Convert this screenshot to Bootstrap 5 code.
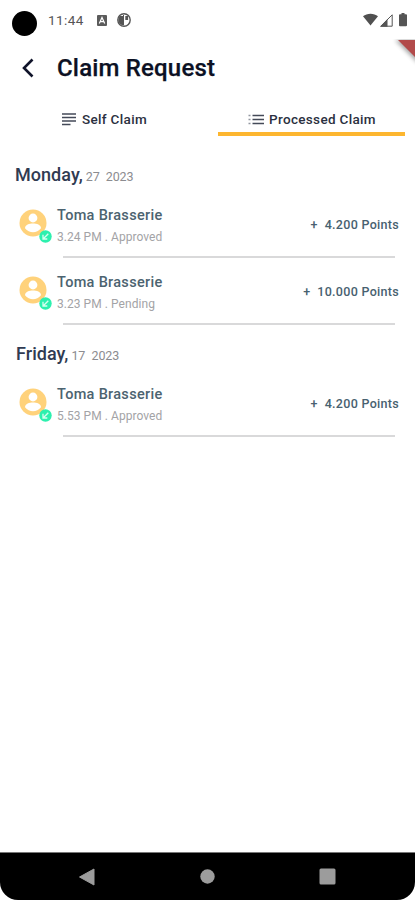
<!DOCTYPE html>
<html lang="en">
<head>
<meta charset="utf-8">
<meta name="viewport" content="width=device-width, initial-scale=1">
<title>Claim Request</title>
<link href="https://cdn.jsdelivr.net/npm/bootstrap@5.3.0/dist/css/bootstrap.min.css" rel="stylesheet">
<style>
body{font-family:Roboto,"Liberation Sans",sans-serif;background:#fff;color:#10182f}
.screen{height:900px;max-width:415px;overflow:hidden}
svg{display:block;flex:none}
.status{height:40px;padding:11px 6px 0 12px}
.camera{width:25px;height:25px;background:#000;border-radius:50%}
.clock{font-size:13.5px;line-height:19px;color:#555;margin-left:11px;width:37px;letter-spacing:.4px;white-space:nowrap}
.ribbon{position:absolute;top:34px;right:0}
.topbar{height:56px;padding-left:20px}
.title{font-size:24px;line-height:28px;font-weight:500;letter-spacing:.18px;margin:0 0 0 21px;color:#0c1124;-webkit-text-stroke:.25px}
.tabs{height:40px;padding:0 10px 0 11px}
.tabs .tab{width:187px;height:40px;color:#2b3040;font-size:13.5px;font-weight:500;border:0;border-bottom:4px solid transparent;padding:11px 0 0;line-height:25px;background:none;letter-spacing:.33px}
.tabs .tab.active{border-color:#fdb62f;}
.groups{padding-top:19px}
.claims{margin-bottom:5px}
.day{height:40px;padding-left:15px;line-height:40px;font-size:18px;font-weight:500;color:#303b52;margin:0;letter-spacing:.05px}
.claims + .claims .day{padding-left:16px}
.day .date{font-size:12.5px;font-weight:400;color:#8c8c90;margin-left:3px;word-spacing:3.4px;letter-spacing:-.15px}
.claim{height:67px;padding:12px 16px 0 19px}
.avatar{width:38px;height:38px}
.avatar .state{position:absolute;left:20px;top:23px}
.person{font-size:14.5px;line-height:18px;color:#4c6370;letter-spacing:.3px;font-weight:500}
.meta{font-size:12px;line-height:16px;color:#a3a3a6;margin-top:4px;letter-spacing:.05px}
.points{font-size:12.5px;line-height:18px;font-weight:500;color:#486170;margin-top:9px;white-space:pre;letter-spacing:.3px}
.rule{height:2px;background:#d9d9da;margin:11px 4px 0 44px}
.navkeys{height:48px;background:#000;border-top:1px solid #777;border-radius:0 0 18px 18px;padding:0 79px}
</style>
<script src="https://cdn.jsdelivr.net/npm/bootstrap@5.3.0/dist/js/bootstrap.bundle.min.js"></script>
</head>
<body>
<svg width="0" height="0" class="position-absolute" aria-hidden="true">
  <symbol id="user" viewBox="0 0 28 28"><circle cx="14" cy="14" r="13.5" fill="#ffd27b"/><circle cx="14" cy="9" r="4.4" fill="#fff"/><path d="M6 19.3c0-3.4 4.4-4.8 8-4.8s8 1.400 8 4.800c-4.200 5.200-11.800 5.200-16 0z" fill="#fff"/></symbol>
  <symbol id="state" viewBox="0 0 13 13"><circle cx="6.500" cy="6.500" r="6.200" fill="#2df0ae"/><path d="M9.300 3.700 4.300 8.700M4 4.800V9h4.300" fill="none" stroke="#d5fff0" stroke-width="1.300"/></symbol>
</svg>
<div class="screen d-flex flex-column position-relative">
  <header class="status d-flex">
    <div class="camera"></div>
    <div class="clock">11:44</div>
    <svg width="10" height="11" viewBox="0 0 10 11" style="margin:4px 0 0 12px"><rect width="10" height="11" rx="1" fill="#5b5b5b"/><path d="M2.300 8.500 5 2.500l2.700 6M3.400 6.700h3.200" fill="none" stroke="#fff" stroke-width="1.200"/></svg>
    <svg width="14" height="14" viewBox="0 0 14 14" style="margin:2px 0 0 10px"><circle cx="7" cy="7" r="6.200" fill="#fff" stroke="#555" stroke-width="1.400"/><path d="M2.500 3h4v9.500C3 12 1.300 9.500 1.300 7zM8.300 3h2.800v4H8.300z" fill="#555"/><path d="M6.500 2v10" stroke="#555"/></svg>
    <div class="ms-auto d-flex">
      <svg width="15" height="13" viewBox="0 0 15 13" style="margin-top:2px"><path d="M0 3.200C4-.2 11-.2 15 3.200L7.500 12.500z" fill="#505050"/></svg>
      <svg width="13" height="13" viewBox="0 0 13 13" style="margin:3px 0 0 2px"><path d="M.8 12.200 12.200.8v11.400z" fill="#fff" stroke="#555"/><path d="M0 12.700 7.500 5v7.700z" fill="#555"/></svg>
      <svg width="8" height="14" viewBox="0 0 8 14" style="margin:2px 2px 0 6px"><path d="M2.500 0h3v1.300H7q1 0 1 1v10q0 1-1 1H1q-1 0-1-1v-10q0-1 1-1h1.500z" fill="#555"/></svg>
    </div>
  </header>
  <svg class="ribbon" width="34" height="36" viewBox="0 0 34 36"><defs><filter id="shade" x="-50%" y="-50%" width="200%" height="200%"><feGaussianBlur stdDeviation="2"/></filter><clipPath id="below"><path d="M0 5h34v31H0z"/></clipPath></defs><g clip-path="url(#below)"><path d="M14 6h24v24z" fill="#000" opacity=".35" filter="url(#shade)"/><path d="M17 6h17v17z" fill="#b24a4a"/></g></svg>
  <div class="topbar d-flex align-items-center">
    <svg width="16" height="22" viewBox="0 0 16 22"><path d="M12.500 2.500 4 11l8.500 8.500" fill="none" stroke="#10142a" stroke-width="2.600"/></svg>
    <h1 class="title">Claim Request</h1>
  </div>
  <nav class="tabs d-flex justify-content-between">
    <button class="tab d-flex align-items-center justify-content-center" type="button">
      <svg width="14" height="13" viewBox="0 0 14 13" style="margin-right:6px"><path d="M0 1h14M0 4.500h14M0 8h14M0 11.500h8.500" stroke="#444a58" stroke-width="1.600"/></svg>Self Claim</button>
    <button class="tab active d-flex align-items-center justify-content-center" type="button" style="padding-left:1px">
      <svg width="16" height="11" viewBox="0 0 16 11" style="margin-right:5px"><path d="M4.500 1.500H16M4.500 5.500H16M4.500 9.500H16" stroke="#444a58" stroke-width="1.600"/><path d="M.5 1.500H2.500M.5 5.500h2M.5 9.500h2" stroke="#9296a0" stroke-width="1.400"/></svg>Processed Claim</button>
  </nav>
  <main class="groups flex-grow-1">
    <section class="claims">
      <h2 class="day">Monday,<span class="date">27 2023</span></h2>
      <article class="claim">
        <div class="d-flex">
          <div class="avatar position-relative"><svg width="28" height="28" style="margin-top:2px"><use href="#user"/></svg><svg class="state" width="13" height="13"><use href="#state"/></svg></div>
          <div><div class="person">Toma Brasserie</div><div class="meta">3.24 PM . Approved</div></div>
          <div class="points ms-auto">+  4.200 Points</div>
        </div>
        <div class="rule"></div>
      </article>
      <article class="claim">
        <div class="d-flex">
          <div class="avatar position-relative"><svg width="28" height="28" style="margin-top:2px"><use href="#user"/></svg><svg class="state" width="13" height="13"><use href="#state"/></svg></div>
          <div><div class="person">Toma Brasserie</div><div class="meta">3.23 PM . Pending</div></div>
          <div class="points ms-auto">+  10.000 Points</div>
        </div>
        <div class="rule"></div>
      </article>
    </section>
    <section class="claims">
      <h2 class="day">Friday,<span class="date">17 2023</span></h2>
      <article class="claim">
        <div class="d-flex">
          <div class="avatar position-relative"><svg width="28" height="28" style="margin-top:2px"><use href="#user"/></svg><svg class="state" width="13" height="13"><use href="#state"/></svg></div>
          <div><div class="person">Toma Brasserie</div><div class="meta">5.53 PM . Approved</div></div>
          <div class="points ms-auto">+  4.200 Points</div>
        </div>
        <div class="rule"></div>
      </article>
    </section>
  </main>
  <footer class="navkeys d-flex align-items-center justify-content-between">
    <svg width="16" height="18" viewBox="0 0 16 18"><path d="M.5 9 15 1v16z" fill="#9c9c9c" stroke="#9c9c9c" stroke-linejoin="round"/></svg>
    <svg width="15" height="15" viewBox="0 0 15 15"><circle cx="7.500" cy="7.500" r="7.200" fill="#9c9c9c"/></svg>
    <svg width="17" height="17" viewBox="0 0 17 17"><rect x=".5" y=".5" width="16" height="16" rx="1.500" fill="#9c9c9c"/></svg>
  </footer>
</div>
</body>
</html>
